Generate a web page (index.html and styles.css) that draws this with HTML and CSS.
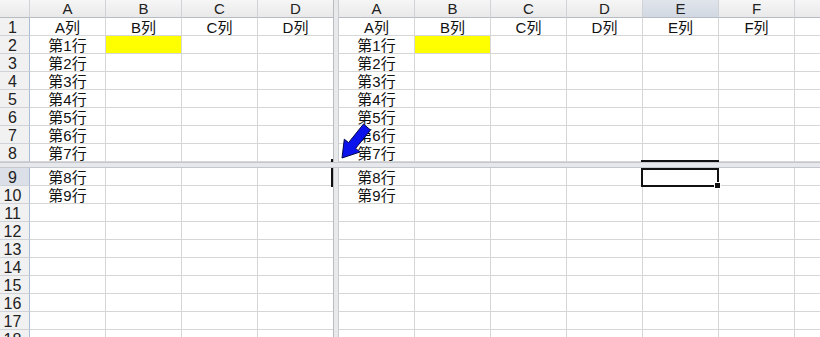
FILE: index.html
```html
<!DOCTYPE html>
<html lang="zh">
<head>
  <meta charset="UTF-8" />
  <title>拆分窗格</title>
  <link rel="stylesheet" href="styles.css">
</head>
<body>
  <div class="sheet">
    <!-- top left pane: rows 1-8 with row headers -->
    <div class="pane left top">
      <div class="corner"></div><div class="ch">A</div><div class="ch">B</div><div class="ch">C</div><div class="ch">D</div>
      <div class="rh">1</div><div>A列</div><div>B列</div><div>C列</div><div>D列</div>
      <div class="rh">2</div><div>第1行</div><div class="fill"></div><div></div><div></div>
      <div class="rh">3</div><div>第2行</div><div></div><div></div><div></div>
      <div class="rh">4</div><div>第3行</div><div></div><div></div><div></div>
      <div class="rh">5</div><div>第4行</div><div></div><div></div><div></div>
      <div class="rh">6</div><div>第5行</div><div></div><div></div><div></div>
      <div class="rh">7</div><div>第6行</div><div></div><div></div><div></div>
      <div class="rh">8</div><div>第7行</div><div></div><div></div><div></div>
      <span class="mark dot"></span>
    </div>

    <div class="vsplit"></div>

    <!-- top right pane: rows 1-8 -->
    <div class="pane right top">
      <div class="ch">A</div><div class="ch">B</div><div class="ch">C</div><div class="ch">D</div><div class="ch active">E</div><div class="ch">F</div><div class="ch"></div>
      <div>A列</div><div>B列</div><div>C列</div><div>D列</div><div>E列</div><div>F列</div><div></div>
      <div>第1行</div><div class="fill"></div><div></div><div></div><div></div><div></div><div></div>
      <div>第2行</div><div></div><div></div><div></div><div></div><div></div><div></div>
      <div>第3行</div><div></div><div></div><div></div><div></div><div></div><div></div>
      <div>第4行</div><div></div><div></div><div></div><div></div><div></div><div></div>
      <div>第5行</div><div></div><div></div><div></div><div></div><div></div><div></div>
      <div>第6行</div><div></div><div></div><div></div><div></div><div></div><div></div>
      <div>第7行</div><div></div><div></div><div></div><div></div><div></div><div></div>
      <span class="mark edge"></span>
    </div>

    <div class="hsplit"></div>

    <!-- bottom left pane: rows 9-18 -->
    <div class="pane left bottom">
      <div class="rh active">9</div><div>第8行</div><div></div><div></div><div></div>
      <div class="rh">10</div><div>第9行</div><div></div><div></div><div></div>
      <div class="rh">11</div><div></div><div></div><div></div><div></div>
      <div class="rh">12</div><div></div><div></div><div></div><div></div>
      <div class="rh">13</div><div></div><div></div><div></div><div></div>
      <div class="rh">14</div><div></div><div></div><div></div><div></div>
      <div class="rh">15</div><div></div><div></div><div></div><div></div>
      <div class="rh">16</div><div></div><div></div><div></div><div></div>
      <div class="rh">17</div><div></div><div></div><div></div><div></div>
      <div class="rh">18</div><div></div><div></div><div></div><div></div>
      <span class="mark bar"></span>
    </div>

    <!-- bottom right pane: rows 9-18, E9 selected -->
    <div class="pane right bottom">
      <div>第8行</div><div></div><div></div><div></div><div></div><div></div><div></div>
      <div>第9行</div><div></div><div></div><div></div><div></div><div></div><div></div>
      <div></div><div></div><div></div><div></div><div></div><div></div><div></div>
      <div></div><div></div><div></div><div></div><div></div><div></div><div></div>
      <div></div><div></div><div></div><div></div><div></div><div></div><div></div>
      <div></div><div></div><div></div><div></div><div></div><div></div><div></div>
      <div></div><div></div><div></div><div></div><div></div><div></div><div></div>
      <div></div><div></div><div></div><div></div><div></div><div></div><div></div>
      <div></div><div></div><div></div><div></div><div></div><div></div><div></div>
      <div></div><div></div><div></div><div></div><div></div><div></div><div></div>
      <span class="selection"><span class="handle"></span></span>
    </div>
  </div>

  <!-- callout arrow pointing at the split -->
  <svg class="arrow" width="820" height="337" viewBox="0 0 820 337">
    <polygon points="342,158 360,152 355.6,148.4 370.5,130 363.5,124 348.6,142.6 344.3,139.2" fill="#0b12ec" stroke="#05064a" stroke-width="1"/>
  </svg>
</body>
</html>
```

FILE: styles.css
```css
body {
  margin: 0;
  width: 820px;
  height: 337px;
  overflow: hidden;
  background: #fff;
  font-family: "Liberation Sans", "Noto Sans CJK SC", sans-serif;
  font-size: 15px;
  color: #111;
  position: relative;
}

.sheet {
  display: grid;
  grid-template-columns: 333px 6px 481px;
  grid-template-rows: 162px 6px 169px;
  height: 337px;
}

/* panes */
.pane {
  display: grid;
  grid-auto-rows: 18px;
  overflow: hidden;
  position: relative;
}

.pane.left {
  grid-template-columns: 30px repeat(4, 76px);
}

.pane.right {
  grid-template-columns: repeat(7, 76px);
}

.pane.top { grid-row: 1; }
.pane.bottom { grid-row: 3; }
.pane.left { grid-column: 1; }
.pane.right { grid-column: 3; }

.pane > div {
  box-sizing: border-box;
  border-right: 1px solid #d6d6d6;
  border-bottom: 1px solid #d6d6d6;
  text-align: center;
  padding-top: 2px;
  line-height: 16px;
  white-space: nowrap;
  overflow: hidden;
}

.pane > .fill {
  background: #ffff00;
}

/* headers */
.pane > .ch,
.pane > .corner {
  background: linear-gradient(#f6f6f6, #e9e9e9);
  border-right: 1px solid #cfd2d6;
  border-bottom: 1px solid #b7bcc4;
  color: #222;
  padding-top: 1px;
}

.pane > .rh {
  background: #f1f1f1;
  border-right: 1px solid #a9bcd3;
  border-bottom: 1px solid #cfd3d8;
  color: #222;
  font-size: 16px;
  padding-right: 4px;
}

.pane > .ch.active {
  background: linear-gradient(#e0e5ec, #d2d8e2);
}

.pane > .rh.active {
  background: #dbe0e8;
}

/* split bars */
.vsplit {
  grid-column: 2;
  grid-row: 1 / 4;
  background: #e8e9eb;
  border-left: 1px solid #b9bcc1;
  border-right: 1px solid #c9ccd0;
}

.hsplit {
  grid-column: 1 / 4;
  grid-row: 2;
  background: #e6e8eb;
  border-top: 1px solid #c4c7cc;
  border-bottom: 1px solid #c4c7cc;
}

/* selection marks */
.mark {
  position: absolute;
  background: #111;
}

.mark.dot {
  left: 331px;
  top: 159px;
  width: 2px;
  height: 3px;
}

.mark.edge {
  left: 302px;
  top: 160px;
  width: 78px;
  height: 2px;
}

.mark.bar {
  left: 331px;
  top: 0;
  width: 2px;
  height: 19px;
}

.selection {
  position: absolute;
  left: 302px;
  top: 0;
  width: 78px;
  height: 19px;
  box-sizing: border-box;
  border: 2px solid #111;
}

.handle {
  position: absolute;
  right: -4px;
  bottom: -4px;
  width: 5px;
  height: 5px;
  background: #111;
  border: 1px solid #fff;
}

.arrow {
  position: absolute;
  left: 0;
  top: 0;
  pointer-events: none;
}
```
